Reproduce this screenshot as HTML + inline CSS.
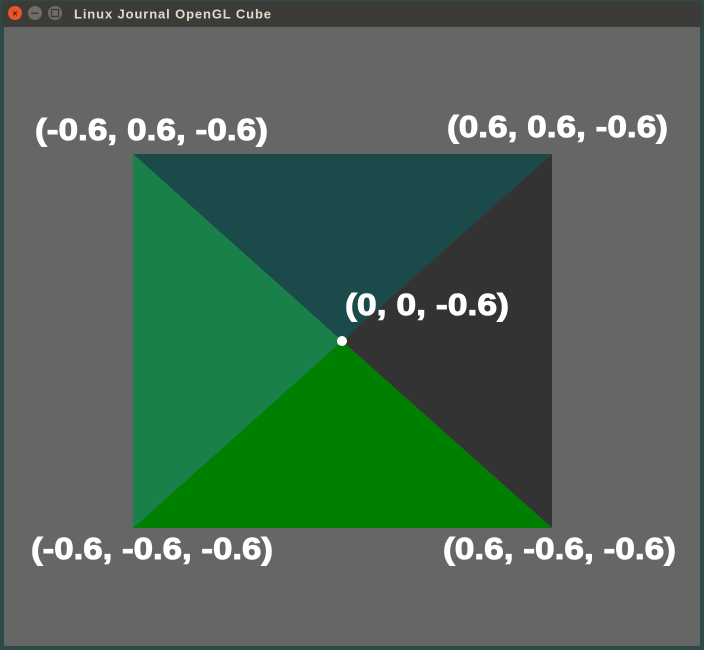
<!DOCTYPE html>
<html><head><style>
html,body{margin:0;padding:0;width:704px;height:650px;overflow:hidden;background:#2b4745}
</style></head><body>
<svg width="704" height="650" xmlns="http://www.w3.org/2000/svg" style="display:block">
<rect x="0" y="0" width="704" height="650" fill="#2d4a48"/>
<rect x="2" y="1" width="700" height="26" fill="#3c3b37"/>
<circle cx="15" cy="13" r="7" fill="#e8542b"/>
<text x="15" y="16.5" font-family="Liberation Sans" font-size="9" font-weight="bold" fill="#5a1a08" text-anchor="middle">×</text>
<circle cx="35" cy="13" r="7" fill="#6e6d68"/>
<rect x="31.5" y="12.5" width="7" height="1.5" fill="#3c3b37"/>
<circle cx="55" cy="13" r="7" fill="#6e6d68"/>
<rect x="51.5" y="9.5" width="7" height="7" fill="none" stroke="#3c3b37" stroke-width="1.3"/>
<text x="74" y="18.5" font-family="Liberation Sans, sans-serif" font-size="13" font-weight="bold" fill="#dfdbd2" textLength="197">Linux Journal OpenGL Cube</text>
<rect x="4" y="27" width="696" height="619" fill="#666666"/>
<polygon points="133,154 552,154 342,341" fill="#1a4a4a"/>
<polygon points="552,154 552,528 342,341" fill="#333333"/>
<polygon points="133,528 552,528 342,341" fill="#008000"/>
<polygon points="133,154 133,528 342,341" fill="#1a804a"/>
<circle cx="342" cy="341" r="5" fill="#ffffff"/>
<g font-family="Liberation Sans, sans-serif" font-size="31" font-weight="bold" fill="#ffffff" stroke="#ffffff" stroke-width="1">
<text x="35" y="140" textLength="233" lengthAdjust="spacingAndGlyphs">(-0.6, 0.6, -0.6)</text>
<text x="447" y="137" textLength="221" lengthAdjust="spacingAndGlyphs">(0.6, 0.6, -0.6)</text>
<text x="345" y="315" textLength="164" lengthAdjust="spacingAndGlyphs">(0, 0, -0.6)</text>
<text x="31" y="559" textLength="242" lengthAdjust="spacingAndGlyphs">(-0.6, -0.6, -0.6)</text>
<text x="443" y="559" textLength="233" lengthAdjust="spacingAndGlyphs">(0.6, -0.6, -0.6)</text>
</g>
</svg>
</body></html>
